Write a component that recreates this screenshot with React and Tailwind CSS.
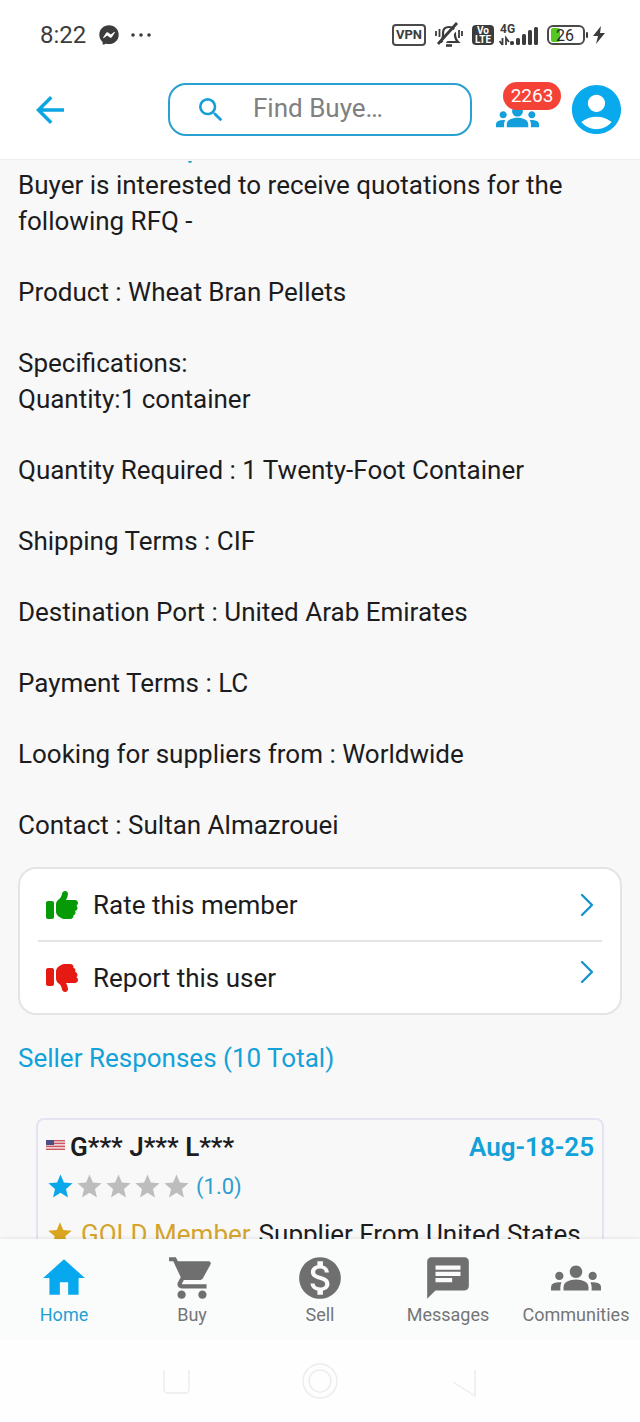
import React from "react";
import {
  MdAccountCircle,
  MdArrowBack,
  MdChat,
  MdGroups,
  MdHome,
  MdMonetizationOn,
  MdSearch,
  MdShoppingCart,
  MdStar,
} from "react-icons/md";
import { FaFacebookMessenger, FaThumbsDown, FaThumbsUp } from "react-icons/fa6";
import { ChevronRight } from "lucide-react";

const details = [
  ["Product : Wheat Bran Pellets"],
  ["Specifications:", "Quantity:1 container"],
  ["Quantity Required : 1 Twenty-Foot Container"],
  ["Shipping Terms : CIF"],
  ["Destination Port : United Arab Emirates"],
  ["Payment Terms : LC"],
  ["Looking for suppliers from : Worldwide"],
  ["Contact : Sultan Almazrouei"],
];

const tabs = [
  { label: "Home", icon: MdHome, active: true },
  { label: "Buy", icon: MdShoppingCart },
  { label: "Sell", icon: MdMonetizationOn },
  { label: "Messages", icon: MdChat },
  { label: "Communities", icon: MdGroups },
];

function StatusBar() {
  return (
    <div className="flex h-[70px] shrink-0 items-center justify-between pl-10 pr-[35px] text-[#3c3c3c]">
      <div className="flex items-center">
        <span className="text-2xl">8:22</span>
        <FaFacebookMessenger size={20} className="ml-[13px]" />
        <svg width="20" height="4" viewBox="0 0 20 4" fill="currentColor" className="ml-3">
          <circle cx="2" cy="2" r="1.8" />
          <circle cx="10" cy="2" r="1.8" />
          <circle cx="18" cy="2" r="1.8" />
        </svg>
      </div>
      <div className="flex items-center">
        <span className="flex h-[22px] w-[34px] items-center justify-center rounded-sm border-2 border-[#4a4a4a] text-[13px] font-bold">
          VPN
        </span>
        <svg width="30" height="26" viewBox="0 0 30 26" fill="none" stroke="currentColor" strokeWidth="2.2" className="ml-2">
          <path d="M6 20h18c-2-2-3-4-3-7v-2c0-4-2-6-6-6s-6 2-6 6v3c0 2-1 4-3 6" />
          <path d="M7 24 25 4" stroke="#fff" strokeWidth="3" />
          <path d="M4 22 23 1" strokeWidth="2.8" />
          <path d="M12 23.5h6" strokeWidth="2.6" />
          <path d="M2 9v5M5.500 7v8M25 8v8M28 9v5" strokeWidth="1.8" />
        </svg>
        <span className="ml-2 flex h-5 w-[22px] flex-col items-center justify-center rounded bg-[#3c3c3c] text-[10px] leading-[9px] font-bold text-white">
          <span>Vo</span>
          <span>LTE</span>
        </span>
        <svg width="42" height="24" viewBox="0 0 42 24" fill="currentColor" className="ml-[5px]">
          <text x="1" y="10" fontSize="12" fontWeight="700">4G</text>
          <path d="M3.500 15v7M0.500 18l3 4M7 22v-7l3 4" stroke="currentColor" strokeWidth="1.8" fill="none" />
          <rect x="11" y="18" width="4" height="4" rx="1.500" />
          <rect x="17" y="15" width="4" height="7" rx="1.500" />
          <rect x="23" y="11" width="4" height="11" rx="1.500" />
          <rect x="29" y="7" width="4" height="15" rx="1.500" />
          <rect x="35" y="4" width="4" height="18" rx="1.500" />
        </svg>
        <svg width="42" height="20" viewBox="0 0 42 20" className="ml-[6px]">
          <rect x="4" y="3" width="9" height="14" rx="2" fill="#55c81f" />
          <rect x="1" y="1" width="36" height="18" rx="5" fill="none" stroke="#4a4a4a" strokeWidth="2" />
          <rect x="39" y="7" width="2" height="6" rx="1" fill="#3c3c3c" />
          <text x="18" y="16" fontSize="16" textAnchor="middle" fill="#2c2c2c">26</text>
        </svg>
        <svg width="12" height="18" viewBox="0 0 12 18" fill="currentColor" className="ml-1">
          <path d="M8 0 0 10h5L3 18l9-11H7z" />
        </svg>
      </div>
    </div>
  );
}

function Header() {
  return (
    <header className="flex h-[90px] shrink-0 items-center border-b border-[#eeeeee] pr-[14px] pb-[10px] pl-[29px]">
      <button aria-label="Back" className="text-[#0ba5e3]">
        <MdArrowBack size={42} />
      </button>
      <label className="ml-[97px] flex h-[53px] min-w-0 flex-1 items-center rounded-[18px] border-2 border-[#2a9fd2] pl-[25px]">
        <MdSearch size={32} className="shrink-0 text-[#159fd8]" />
        <input
          type="text"
          aria-label="Find Buyers"
          placeholder="Find Buye…"
          className="mb-[2px] ml-[26px] w-full min-w-0 bg-transparent text-[26px] outline-none placeholder:text-[#808080]"
        />
      </label>
      <button aria-label="Community requests" className="relative mt-[14px] ml-6 text-[#129fdc]">
        <MdGroups size={43} />
        <span className="absolute -top-[13px] left-[7px] flex h-7 w-[58px] items-center justify-center rounded-full bg-[#f44336] pt-px text-[19px] text-white">
          2263
        </span>
      </button>
      <button aria-label="Account" className="ml-7 text-[#09a9ee]">
        <MdAccountCircle size={59} />
      </button>
    </header>
  );
}

function MemberActions() {
  return (
    <div className="mt-6 rounded-[18px] border-2 border-[#e4e4e4] bg-white px-[18px]">
      <button className="flex h-[73px] w-full items-center border-b-2 border-[#e4e4e4] pl-2">
        <FaThumbsUp size={32} className="text-[#069a06]" />
        <span className="ml-[15px]">Rate this member</span>
        <ChevronRight size={40} strokeWidth={1.4} className="-mr-[5px] ml-auto text-[#1792cc]" />
      </button>
      <button className="flex h-[71px] w-full items-center pl-2">
        <FaThumbsDown size={32} className="text-[#e51a12]" />
        <span className="ml-[15px]">Report this user</span>
        <ChevronRight size={40} strokeWidth={1.4} className="-mr-[5px] mb-3 ml-auto text-[#1792cc]" />
      </button>
    </div>
  );
}

function UsFlag() {
  return (
    <svg width="19" height="10" viewBox="0 0 19 10" className="mb-1">
      <rect width="19" height="10" fill="#eccfd3" />
      <path d="M0 .5h19M0 3.3h19M0 6.3h19M0 9.3h19" stroke="#cc5560" strokeWidth="1.3" />
      <rect width="8" height="5" fill="#4a4f86" />
    </svg>
  );
}

function SellerResponse() {
  return (
    <article className="mx-[18px] mt-[42px] rounded-lg border-2 border-[#e3e3f1] px-2 pt-[9px] pb-5">
      <div className="flex items-center font-semibold">
        <UsFlag />
        <h3 className="ml-[5px]">G*** J*** L***</h3>
        <time className="ml-auto text-[#12a1d8]">Aug-18-25</time>
      </div>
      <div className="mt-[3px] flex h-9 items-center">
        {[1, 2, 3, 4, 5].map((n) => (
          <MdStar key={n} size={29} className={n === 1 ? "text-[#08a8ea]" : "text-[#bdbdbd]"} />
        ))}
        <span className="ml-[5px] pt-px text-[22px] text-[#2a9fce]">(1.0)</span>
      </div>
      <div className="mt-3 flex items-center whitespace-nowrap">
        <MdStar size={28} className="text-[#daa520]" />
        <span className="ml-[7px] text-[#d4a52c]">GOLD Member</span>
        <span className="ml-2">Supplier From United States</span>
      </div>
    </article>
  );
}

function TabBar() {
  return (
    <nav className="z-10 grid h-[99px] shrink-0 grid-cols-5 bg-[#fafcfb] shadow-[0_-1px_4px_rgba(0,0,0,0.08)]">
      {tabs.map(({ label, icon: Icon, active }) => (
        <a
          key={label}
          href="#"
          className={`flex flex-col items-center pt-[14px] text-lg leading-6 ${active ? "text-[#1f9fd4]" : "text-[#757575]"}`}
        >
          <Icon size={50} className={active ? "text-[#08a8ee]" : "text-[#6f6f6f]"} />
          <span>{label}</span>
        </a>
      ))}
    </nav>
  );
}

function SystemNav() {
  return (
    <div className="flex h-[84px] shrink-0 justify-center bg-[#fefefe]">
      <svg width="320" height="84" viewBox="160 0 320 84" fill="none" stroke="#ececec" strokeWidth="1.4">
        <path d="M164 32v19q0 4 4 4h17q4 0 4-4V32" />
        <circle cx="320" cy="43" r="17" />
        <circle cx="320" cy="43" r="11" />
        <path d="M453 44l22 14V32" />
      </svg>
    </div>
  );
}

export default function App() {
  return (
    <div className="flex h-screen flex-col overflow-hidden bg-white font-[Roboto,sans-serif]">
      <StatusBar />
      <Header />
      <main className="min-h-0 flex-1 overflow-hidden bg-[#f8f8f8] px-[18px] text-[26px] leading-9 text-[#1c1c1e]">
        <div className="mt-px ml-[170px] h-[2px] w-1 rounded-b bg-[#3a9fd0]" />
        <div className="mt-1 flex flex-col gap-[35px]">
          <p>Buyer is interested to receive quotations for the following RFQ -</p>
          {details.map((lines) => (
            <p key={lines[0]}>
              {lines.map((line) => (
                <span key={line} className="block">
                  {line}
                </span>
              ))}
            </p>
          ))}
        </div>
        <MemberActions />
        <h2 className="mt-[25px] text-[#12a1d8]">Seller Responses (10 Total)</h2>
        <SellerResponse />
      </main>
      <TabBar />
      <SystemNav />
    </div>
  );
}
